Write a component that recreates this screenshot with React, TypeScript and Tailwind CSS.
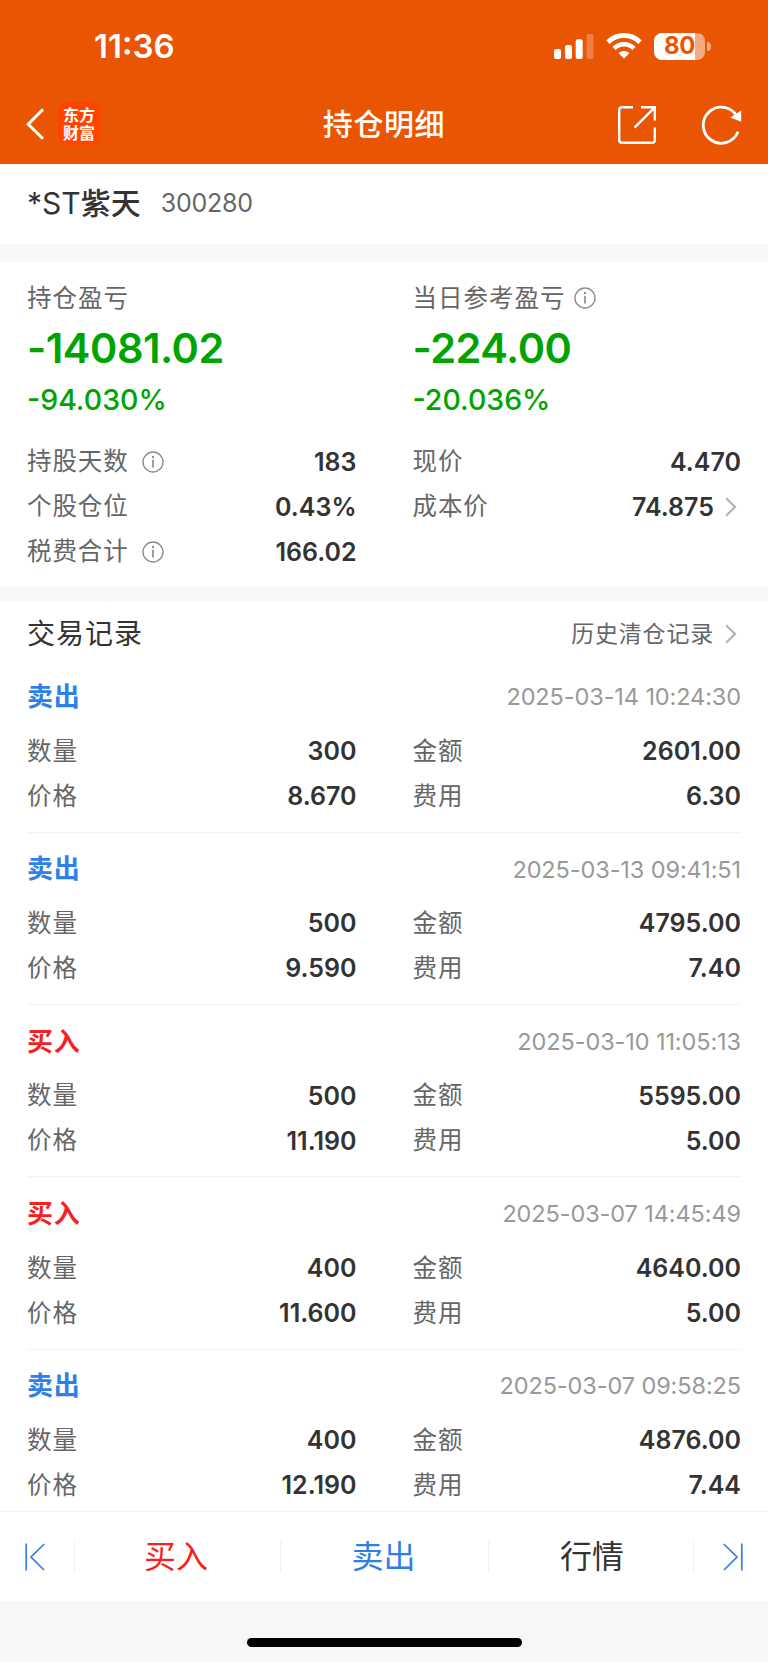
import type { ReactNode } from "react";

interface Trade {
  type: "buy" | "sell";
  time: string;
  quantity: string;
  price: string;
  amount: string;
  fee: string;
}

const trades: Trade[] = [
  { type: "sell", time: "2025-03-14 10:24:30", quantity: "300", price: "8.670", amount: "2601.00", fee: "6.30" },
  { type: "sell", time: "2025-03-13 09:41:51", quantity: "500", price: "9.590", amount: "4795.00", fee: "7.40" },
  { type: "buy", time: "2025-03-10 11:05:13", quantity: "500", price: "11.190", amount: "5595.00", fee: "5.00" },
  { type: "buy", time: "2025-03-07 14:45:49", quantity: "400", price: "11.600", amount: "4640.00", fee: "5.00" },
  { type: "sell", time: "2025-03-07 09:58:25", quantity: "400", price: "12.190", amount: "4876.00", fee: "7.44" },
];

function InfoIcon() {
  return (
    <svg width="22" height="22" viewBox="0 0 22 22" fill="none" stroke="#8e8e8e" strokeWidth="1.4">
      <circle cx="11" cy="11" r="10" />
      <path d="M11 8.8V16.6" strokeWidth="1.7" />
      <circle cx="11" cy="6" r="1.2" fill="#8e8e8e" stroke="none" />
    </svg>
  );
}

function ChevronRight() {
  return (
    <svg width="12" height="20" viewBox="0 0 12 20" fill="none" stroke="#b4b4b4" strokeWidth="2.2">
      <path d="M1.2 1.2L10 10L1.2 18.8" />
    </svg>
  );
}

function StatusBar() {
  return (
    <div className="flex h-[92px] items-center justify-between pl-[94px] pr-[57px] text-white">
      <span className="pt-px text-[33px] font-semibold leading-none">11:36</span>
      <div className="flex items-center">
        <svg width="40" height="28" viewBox="0 0 40 28" fill="#fff">
          <rect x="0" y="17" width="7" height="10" rx="2" />
          <rect x="11" y="13" width="7" height="14" rx="2" />
          <rect x="21.7" y="7.2" width="7" height="19.8" rx="2" />
          <rect x="32.5" y="2" width="7" height="25" rx="2" opacity="0.25" />
        </svg>
        <svg className="ml-[12px]" width="36" height="28" viewBox="0 0 36 28" fill="none" stroke="#fff">
          <path d="M2 10.2A22.6 22.6 0 0 1 34 10.2" strokeWidth="5" />
          <path d="M8 16.4A14.2 14.2 0 0 1 28 16.4" strokeWidth="4.6" />
          <path d="M18 26.6L12.6 21.2A8 8 0 0 1 23.4 21.2Z" fill="#fff" stroke="none" />
        </svg>
        <div className="ml-[12px] flex h-[27px] w-[51px] items-center justify-center rounded-[8px] bg-[linear-gradient(90deg,#fff_41px,#f5aa82_41px)] text-[24px] font-bold leading-none tracking-[-0.3px] text-[#ea5504]">
          80
        </div>
        <div className="ml-[2px] h-[9px] w-[4px] rounded-r-full bg-white/50" />
      </div>
    </div>
  );
}

function NavBar() {
  return (
    <div className="grid h-[71px] grid-cols-[1fr_auto_1fr] items-start pl-[26px] pr-[26px] text-white">
      <div className="flex items-center pt-[10px]">
        <svg width="18" height="32" viewBox="0 0 18 32" fill="none" stroke="#fff" strokeWidth="3">
          <path d="M17 1.4L2.2 16.2L17 30.8" />
        </svg>
        <div className="ml-[14px] flex h-[43px] w-[42px] flex-col items-center justify-center rounded-[11px] bg-[#ff4400] text-[16px] font-bold leading-[18px]">
          <span>东方</span>
          <span>财富</span>
        </div>
      </div>
      <h1 className="pt-[12px] text-[30px] font-medium leading-[40px] tracking-[0.6px]">持仓明细</h1>
      <div className="flex justify-end pt-[12.5px]">
        <svg width="40" height="40" viewBox="0 0 40 40" fill="none" stroke="#fff" strokeWidth="2.4">
          <path d="M16 2.3H5Q2.2 2.3 2.2 5V35Q2.2 37.8 5 37.8H35Q37.8 37.8 37.8 35V22.5" />
          <path d="M24 2.3H37.8V15.5M37.5 2.6L17.5 22.6" />
        </svg>
        <svg className="-mr-px ml-[44px]" width="42" height="40" viewBox="0 0 42 40" fill="none" stroke="#fff" strokeWidth="2.8">
          <path d="M37 26.8A18 18 0 1 1 36 11.5" />
          <path d="M29.3 12.6L40.2 5.4V16.8Z" fill="#fff" stroke="none" />
        </svg>
      </div>
    </div>
  );
}

interface FieldProps {
  label: string;
  value: string;
  info?: boolean;
  after?: ReactNode;
}

function Field({ label, value, info, after }: FieldProps) {
  return (
    <div className="flex h-[45px] items-center">
      <span className="text-[24.5px] leading-none tracking-[0.9px] text-[#666]">{label}</span>
      {info && (
        <span className="ml-[13px]">
          <InfoIcon />
        </span>
      )}
      <span className="ml-auto pt-px text-[25px] font-semibold leading-none text-[#333]">{value}</span>
      {after}
    </div>
  );
}

function TradeItem({ trade }: { trade: Trade }) {
  const buy = trade.type === "buy";
  return (
    <div className="h-[172.25px] border-b border-[#f2f2f2] pt-[16px]">
      <div className="flex h-[41px] items-center justify-between">
        <span className={`text-[26px] font-bold leading-none tracking-[0.8px] ${buy ? "text-[#f91f1f]" : "text-[#2f7fe8]"}`}>
          {buy ? "买入" : "卖出"}
        </span>
        <span className="text-[23.5px] leading-none tracking-[-0.1px] text-[#999]">{trade.time}</span>
      </div>
      <div className="mt-[11px] grid grid-cols-[329.5px_328.5px] justify-between">
        <Field label="数量" value={trade.quantity} />
        <Field label="金额" value={trade.amount} />
        <Field label="价格" value={trade.price} />
        <Field label="费用" value={trade.fee} />
      </div>
    </div>
  );
}

interface ProfitProps {
  label: string;
  value: string;
  percent: string;
  info?: boolean;
}

function Profit({ label, value, percent, info }: ProfitProps) {
  return (
    <div>
      <div className="flex h-[36px] items-center">
        <span className="pt-px text-[24.5px] leading-none tracking-[1px] text-[#666]">{label}</span>
        {info && (
          <span className="ml-[8px]">
            <InfoIcon />
          </span>
        )}
      </div>
      <div className="flex h-[64px] items-center pt-px text-[41.5px] font-semibold leading-none tracking-[-0.5px] text-[#00a400]">
        {value}
      </div>
      <div className="flex h-[41px] items-center text-[28.5px] font-[550] leading-none text-[#00a400]">{percent}</div>
    </div>
  );
}

function BottomBar() {
  return (
    <div className="flex h-[90px] shrink-0 items-center border-t border-[#f2f2f2] bg-white">
      <div className="flex w-[74px] justify-start pl-[25px]">
        <svg width="20" height="28" viewBox="0 0 20 28" fill="none" stroke="#2f7fe8" strokeWidth="1.7">
          <path d="M1.2 0.5V27.5M19.3 1L6 14L19 27" />
        </svg>
      </div>
      <div className="flex h-[31px] w-[206px] items-center justify-center border-l border-[#efefef] pr-[3px] text-[32px] leading-none text-[#f91f1f]">
        买入
      </div>
      <div className="flex h-[31px] w-[208px] items-center justify-center border-l border-[#efefef] pr-[2px] text-[32px] leading-none text-[#2f7fe8]">
        卖出
      </div>
      <div className="flex h-[31px] w-[206px] items-center justify-center border-x border-[#efefef] pl-[2px] text-[32px] leading-none text-[#333]">
        行情
      </div>
      <div className="flex w-[74px] justify-end pr-[25px]">
        <svg width="20" height="28" viewBox="0 0 20 28" fill="none" stroke="#2f7fe8" strokeWidth="1.7">
          <path d="M18.8 0.5V27.5M0.7 1L14 14L1 27" />
        </svg>
      </div>
    </div>
  );
}

export default function App() {
  return (
    <div className="flex h-[1662px] w-[768px] flex-col overflow-hidden bg-white font-['Inter','Noto_Sans_CJK_SC',sans-serif]">
      <header className="h-[163.5px] shrink-0 bg-[#ea5504]">
        <StatusBar />
        <NavBar />
      </header>

      {/* 股票名称 */}
      <div className="flex h-[80.5px] shrink-0 items-center pl-[27px]">
        <span className="pb-[2px] text-[30px] leading-none text-[#333]">
          *ST<span className="font-medium">紫天</span>
        </span>
        <span className="ml-[20px] text-[25px] leading-none tracking-[-0.2px] text-[#666]">300280</span>
      </div>
      <div className="h-[18px] shrink-0 bg-[#f6f7f9]" />

      {/* 持仓概览 */}
      <section className="h-[325px] shrink-0 px-[27px] pt-[18px]">
        <div className="grid grid-cols-[329.5px_328.5px] justify-between">
          <Profit label="持仓盈亏" value="-14081.02" percent="-94.030%" />
          <Profit label="当日参考盈亏" value="-224.00" percent="-20.036%" info />
        </div>
        <div className="mt-[18px] grid grid-cols-[329.5px_328.5px] justify-between">
          <Field label="持股天数" value="183" info />
          <Field label="现价" value="4.470" />
          <Field label="个股仓位" value="0.43%" />
          <Field
            label="成本价"
            value="74.875"
            after={
              <span className="ml-[11px] mr-[4px]">
                <ChevronRight />
              </span>
            }
          />
          <Field label="税费合计" value="166.02" info />
        </div>
      </section>
      <div className="h-[14px] shrink-0 bg-[#f6f7f9]" />

      {/* 交易记录 */}
      <section className="min-h-0 flex-1 overflow-hidden px-[27px]">
        <div className="flex h-[59.5px] items-center justify-between pt-[7px]">
          <h2 className="text-[28px] leading-none tracking-[1px] text-[#333]">交易记录</h2>
          <div className="flex items-center text-[23px] leading-none tracking-[0.8px] text-[#666]">
            历史清仓记录
            <span className="ml-[11px] mr-[4px]">
              <ChevronRight />
            </span>
          </div>
        </div>
        {trades.map((trade) => (
          <TradeItem key={trade.time} trade={trade} />
        ))}
      </section>

      <BottomBar />
      <div className="flex h-[61px] shrink-0 justify-center bg-[#f6f7f9] pt-[37px]">
        <div className="h-[9px] w-[275px] rounded-full bg-black" />
      </div>
    </div>
  );
}
